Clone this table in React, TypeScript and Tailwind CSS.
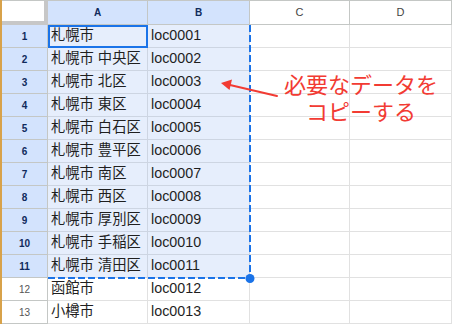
const cities = [
  '札幌市',
  '札幌市 中央区',
  '札幌市 北区',
  '札幌市 東区',
  '札幌市 白石区',
  '札幌市 豊平区',
  '札幌市 南区',
  '札幌市 西区',
  '札幌市 厚別区',
  '札幌市 手稲区',
  '札幌市 清田区',
  '函館市',
  '小樽市',
]

const rows = cities.map((name, i) => ({
  n: i + 1,
  name,
  code: `loc${String(i + 1).padStart(4, '0')}`,
  selected: i < 11,
}))

function HeaderRow() {
  return (
    <div className="flex h-[25px] border-t border-[#c4c7c5] text-[10px]">
      <div className="w-[46px] shrink-0 border-b-4 border-r-4 border-[#c7c7c7] bg-white" />
      <div className="flex w-[100px] shrink-0 items-center justify-center border-b border-r border-[#c4c7c5] bg-[#d3e3fd] font-bold text-[#0f2a5c]">A</div>
      <div className="flex w-[102px] shrink-0 items-center justify-center border-b border-r border-[#c4c7c5] bg-[#d3e3fd] font-bold text-[#0f2a5c]">B</div>
      <div className="flex w-[100px] shrink-0 items-center justify-center border-b border-r border-[#c4c7c5] bg-white text-[11px] text-[#444]">C</div>
      <div className="flex w-[102px] shrink-0 items-center justify-center border-b border-r border-[#c4c7c5] bg-white text-[11px] text-[#444]">D</div>
    </div>
  )
}

function Row({ n, name, code, selected }: { n: number; name: string; code: string; selected: boolean }) {
  const cell = selected ? 'border-[#cdd5e2] bg-[#e6eefc]' : 'border-[#e1e1e1] bg-white'
  return (
    <div className="flex h-[23px]">
      <div
        className={
          selected
            ? 'flex w-[46px] shrink-0 items-center justify-center border-b border-r border-[#c4c7c5] bg-[#d3e3fd] text-[10px] font-bold text-[#0f2a5c]'
            : 'flex w-[46px] shrink-0 items-center justify-center border-b border-r border-[#c4c7c5] bg-white text-[10px] text-[#555]'
        }
      >
        {n}
      </div>
      <div className={`flex w-[100px] shrink-0 items-center overflow-hidden whitespace-nowrap border-b border-r pl-[3px] text-[14.3px] text-[#1f1f1f] ${cell}`}>
        {name}
      </div>
      <div className={`flex w-[102px] shrink-0 items-center overflow-hidden whitespace-nowrap border-b border-r pl-[3px] text-[14.3px] text-[#1f1f1f] ${cell}`}>
        {code}
      </div>
      <div className="w-[100px] shrink-0 border-b border-r border-[#e1e1e1]" />
      <div className="w-[102px] shrink-0 border-b border-r border-[#e1e1e1]" />
    </div>
  )
}

export default function App() {
  return (
    <div className="relative flex h-[324px] w-[453px] overflow-hidden bg-white font-['Liberation_Sans','Noto_Sans_CJK_JP',sans-serif]">
      <div className="w-[2px] shrink-0 bg-[#d8a24a]" />
      <div className="flex flex-col">
        <HeaderRow />
        {rows.map((r) => (
          <Row key={r.n} {...r} />
        ))}
      </div>

      {/* active cell A1 */}
      <div className="absolute left-[48px] top-[25px] h-[23px] w-[100px] border-2 border-[#1a73e8]" />

      {/* copy marquee + fill handle */}
      <svg className="absolute left-0 top-0" width="453" height="324">
        <line x1="250" y1="25" x2="250" y2="278" stroke="#1a73e8" strokeWidth="2" strokeDasharray="7 3" />
        <line x1="48" y1="278" x2="250" y2="278" stroke="#1a73e8" strokeWidth="2" strokeDasharray="7 3" />
        <circle cx="250" cy="278.5" r="4.5" fill="#1a73e8" />
        {/* callout arrow */}
        <line x1="277" y1="96" x2="230" y2="85" stroke="#f23b33" strokeWidth="2" strokeLinecap="round" />
        <polygon points="221,83 232,79.5 229.5,90" fill="#f23b33" />
      </svg>

      <div className="absolute left-[261px] top-[72px] w-[200px] text-center text-[22px] leading-[27px] text-[#f23b33]">
        <div>必要なデータを</div>
        <div>コピーする</div>
      </div>
    </div>
  )
}
